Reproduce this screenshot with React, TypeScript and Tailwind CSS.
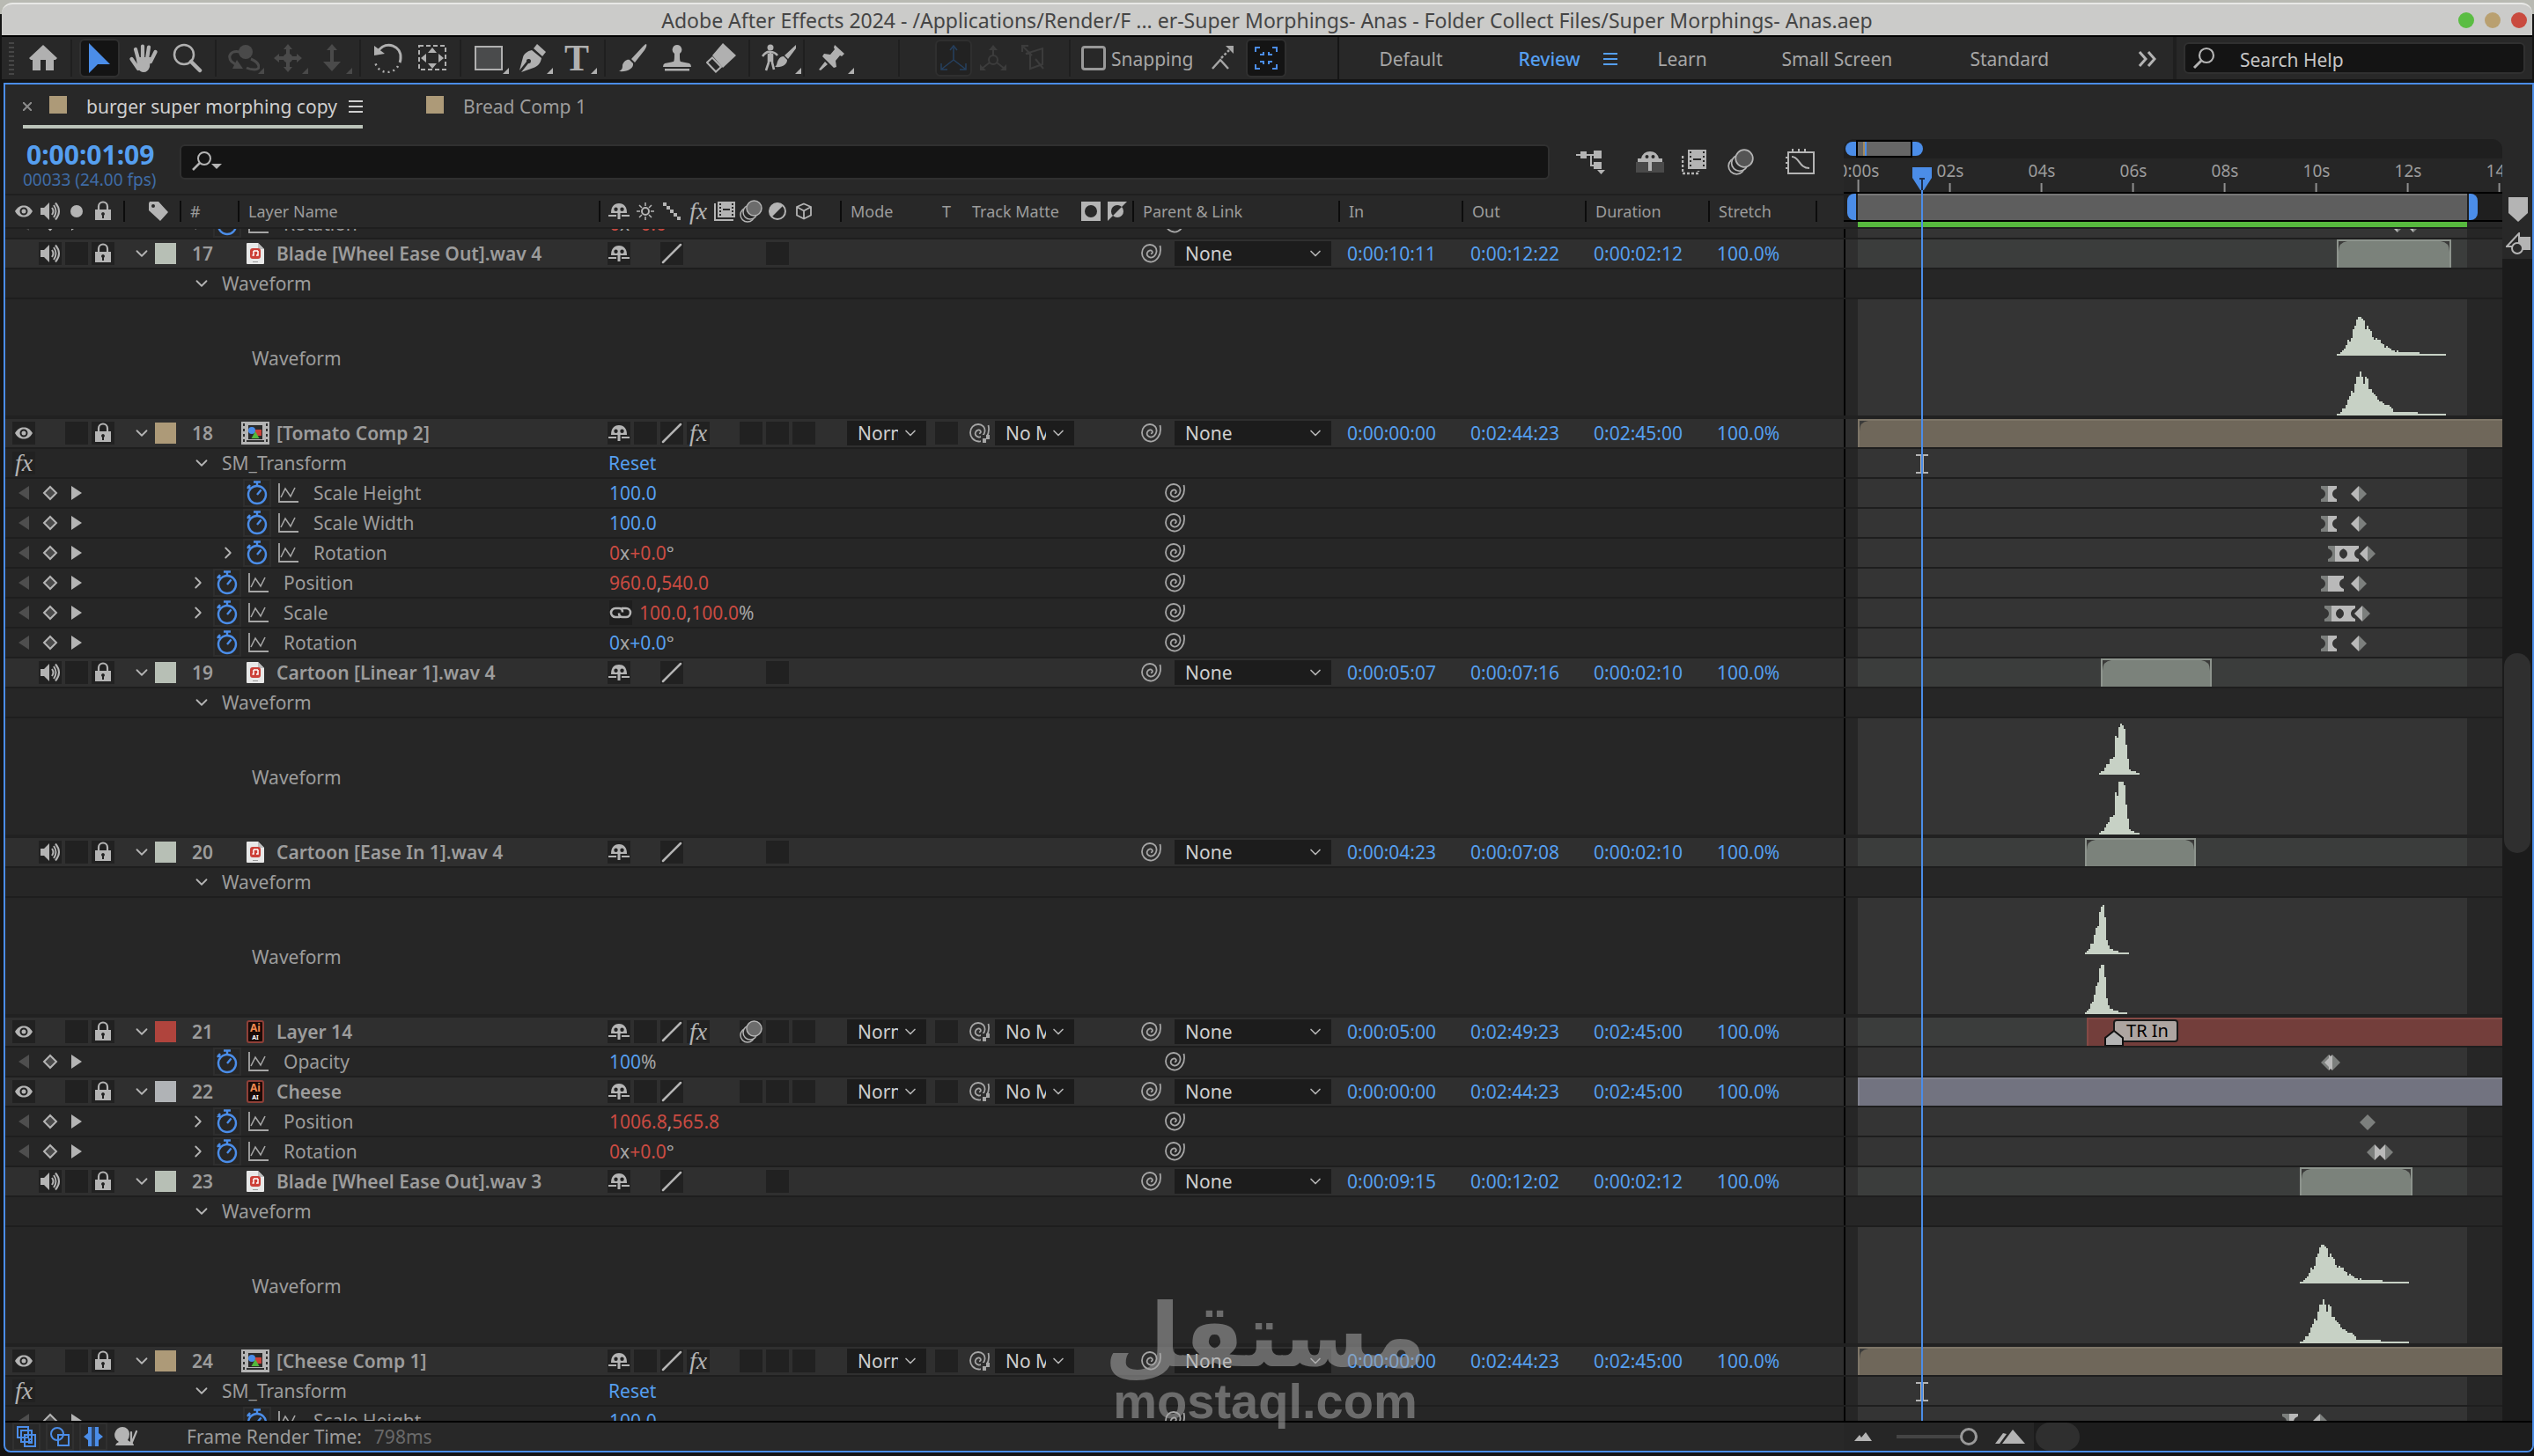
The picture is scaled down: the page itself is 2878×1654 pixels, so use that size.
import type { ReactNode } from 'react';
import { ChevronDown, ChevronRight } from 'lucide-react';

const PX_PER_SECOND = 52;

type Key = { kind: 'hold' | 'holdFull' | 'diamond' | 'diamondStart' | 'dim'; x: number };

type Layer = {
  type: 'layer';
  num: number;
  name: string;
  label: string;
  source: 'wav' | 'comp' | 'ai';
  fx?: boolean;
  blur?: boolean;
  clip: { left: number; width?: number; color: string };
  marker?: string;
  times: [string, string, string];
};
type Prop = {
  type: 'prop';
  name: string;
  depth: 1 | 2;
  twirl?: boolean;
  link?: boolean;
  value: [string, 'blue' | 'red' | 'gray'][];
  keys: Key[];
};
type Group = { type: 'group'; name: string; effect?: boolean };
type Wave = { type: 'wave'; left: number; top: number[]; bottom: number[] };
type Row = Layer | Prop | Group | Wave;

const tail = (h: number, n: number) => Array<number>(n).fill(h);

const bladeTop = [2, 2, 4, 6, 8, 12, 18, 16, 20, 30, 34, 41, 44, 44, 42, 40, 30, 34, 30, 28, 21, 18, 20, 18, 18, 14, 13, 9, 11, 9, 8, 6, 6, 4, 6, ...tail(4, 12), ...tail(2, 15)];
const bladeBottom = [2, 2, 4, 8, 8, 12, 18, 22, 28, 26, 36, 44, 44, 50, 44, 36, 44, 42, 30, 30, 26, 24, 22, 18, 16, 16, 14, 12, 12, 12, 10, 8, ...tail(4, 14), ...tail(2, 16)];
const linearTop = [2, 4, 4, 8, 12, 12, 18, 18, 20, 44, 42, 54, 58, 56, 52, 34, 18, 6, 4, 4, 4, 2, 2];
const linearBottom = [2, 4, 4, 8, 12, 14, 20, 20, 22, 48, 44, 60, 60, 60, 56, 34, 18, 6, 4, 4, 2, 2, 2];
const easeTop = [2, 4, 6, 12, 12, 22, 30, 32, 48, 54, 56, 42, 16, 10, 6, 6, 4, 4, 4, ...tail(2, 6)];
const easeBottom = [2, 4, 6, 12, 14, 22, 32, 36, 52, 56, 56, 42, 18, 10, 6, 6, 4, 4, 4, ...tail(2, 5)];

const sage = 'bg-[#7b827b] border-[#8d948d]';
const tan = 'bg-[#6f675a] border-[#7d7567]';
const tanLabel = 'bg-[#ad9a78]';
const sageLabel = 'bg-[#b7bfb5]';

const compTimes: [string, string, string] = ['0:00:00:00', '0:02:44:23', '0:02:45:00'];

const rows: Row[] = [
  { type: 'prop', name: 'Rotation', depth: 1, twirl: true, value: [['0', 'red'], ['x', 'gray'], ['+0.0', 'red'], ['°', 'gray']], keys: [{ kind: 'diamond', x: 613 }, { kind: 'diamond', x: 631 }] },
  { type: 'layer', num: 17, name: 'Blade [Wheel Ease Out].wav 4', label: sageLabel, source: 'wav', clip: { left: 544, width: 130, color: sage }, times: ['0:00:10:11', '0:00:12:22', '0:00:02:12'] },
  { type: 'group', name: 'Waveform' },
  { type: 'wave', left: 544, top: bladeTop, bottom: bladeBottom },
  { type: 'layer', num: 18, name: '[Tomato Comp 2]', label: tanLabel, source: 'comp', fx: true, clip: { left: 0, color: tan }, times: compTimes },
  { type: 'group', name: 'SM_Transform', effect: true },
  { type: 'prop', name: 'Scale Height', depth: 2, value: [['100.0', 'blue']], keys: [{ kind: 'hold', x: 535 }, { kind: 'diamond', x: 569 }] },
  { type: 'prop', name: 'Scale Width', depth: 2, value: [['100.0', 'blue']], keys: [{ kind: 'hold', x: 535 }, { kind: 'diamond', x: 569 }] },
  { type: 'prop', name: 'Rotation', depth: 2, twirl: true, value: [['0', 'red'], ['x', 'gray'], ['+0.0', 'red'], ['°', 'gray']], keys: [{ kind: 'hold', x: 543 }, { kind: 'holdFull', x: 560 }, { kind: 'diamond', x: 579 }] },
  { type: 'prop', name: 'Position', depth: 1, twirl: true, value: [['960.0', 'red'], [',', 'gray'], ['540.0', 'red']], keys: [{ kind: 'hold', x: 535 }, { kind: 'holdFull', x: 543 }, { kind: 'diamond', x: 569 }] },
  { type: 'prop', name: 'Scale', depth: 1, twirl: true, link: true, value: [['100.0', 'red'], [',', 'gray'], ['100.0', 'red'], ['%', 'gray']], keys: [{ kind: 'hold', x: 539 }, { kind: 'holdFull', x: 556 }, { kind: 'diamond', x: 573 }] },
  { type: 'prop', name: 'Rotation', depth: 1, value: [['0', 'blue'], ['x', 'gray'], ['+0.0', 'blue'], ['°', 'gray']], keys: [{ kind: 'hold', x: 535 }, { kind: 'diamond', x: 569 }] },
  { type: 'layer', num: 19, name: 'Cartoon [Linear 1].wav 4', label: sageLabel, source: 'wav', clip: { left: 276, width: 126, color: sage }, times: ['0:00:05:07', '0:00:07:16', '0:00:02:10'] },
  { type: 'group', name: 'Waveform' },
  { type: 'wave', left: 274, top: linearTop, bottom: linearBottom },
  { type: 'layer', num: 20, name: 'Cartoon [Ease In 1].wav 4', label: sageLabel, source: 'wav', clip: { left: 258, width: 126, color: sage }, times: ['0:00:04:23', '0:00:07:08', '0:00:02:10'] },
  { type: 'group', name: 'Waveform' },
  { type: 'wave', left: 258, top: easeTop, bottom: easeBottom },
  { type: 'layer', num: 21, name: 'Layer 14', label: 'bg-[#b0443d]', source: 'ai', fx: true, blur: true, clip: { left: 260, color: 'bg-[#733e3b] border-[#854a46]' }, marker: 'TR In', times: ['0:00:05:00', '0:02:49:23', '0:02:45:00'] },
  { type: 'prop', name: 'Opacity', depth: 1, value: [['100', 'blue'], ['%', 'gray']], keys: [{ kind: 'diamondStart', x: 535 }, { kind: 'diamond', x: 539 }] },
  { type: 'layer', num: 22, name: 'Cheese', label: 'bg-[#b0b3b6]', source: 'ai', clip: { left: 0, color: 'bg-[#727380] border-[#80818d]' }, times: compTimes },
  { type: 'prop', name: 'Position', depth: 1, twirl: true, value: [['1006.8', 'red'], [',', 'gray'], ['565.8', 'red']], keys: [{ kind: 'dim', x: 579 }] },
  { type: 'prop', name: 'Rotation', depth: 1, twirl: true, value: [['0', 'red'], ['x', 'gray'], ['+0.0', 'red'], ['°', 'gray']], keys: [{ kind: 'diamondStart', x: 587 }, { kind: 'diamond', x: 599 }] },
  { type: 'layer', num: 23, name: 'Blade [Wheel Ease Out].wav 3', label: sageLabel, source: 'wav', clip: { left: 502, width: 128, color: sage }, times: ['0:00:09:15', '0:00:12:02', '0:00:02:12'] },
  { type: 'group', name: 'Waveform' },
  { type: 'wave', left: 502, top: bladeTop, bottom: bladeBottom },
  { type: 'layer', num: 24, name: '[Cheese Comp 1]', label: tanLabel, source: 'comp', fx: true, clip: { left: 0, color: tan }, times: compTimes },
  { type: 'group', name: 'SM_Transform', effect: true },
  { type: 'prop', name: 'Scale Height', depth: 2, value: [['100.0', 'blue']], keys: [{ kind: 'hold', x: 491 }, { kind: 'diamond', x: 525 }] },
];

const valueColors = { blue: 'text-[#559ff0]', red: 'text-[#cb4b42]', gray: 'text-[#a6a6a6]' };

/* ---------- icons ---------- */

function Svg({ w = 24, h = 24, box, className = '', children }: { w?: number; h?: number; box?: string; className?: string; children: ReactNode }) {
  return (
    <svg width={w} height={h} viewBox={box ?? `0 0 ${w} ${h}`} fill="currentColor" className={`shrink-0 ${className}`} aria-hidden="true">
      {children}
    </svg>
  );
}

const EyeIcon = () => (
  <Svg w={22} h={22}>
    <path fillRule="evenodd" d="M1 11C4 6 7 4.500 11 4.500S18 6 21 11C18 16 15 17.500 11 17.500S4 16 1 11ZM11 6.500a4.500 4.500 0 1 0 0 9a4.500 4.500 0 1 0 0-9Z" />
    <circle cx="11" cy="11" r="2.500" />
  </Svg>
);

const SpeakerIcon = () => (
  <Svg w={24} h={24}>
    <path d="M1 8h4l6-6v20l-6-6H1Z" />
    <g fill="none" stroke="currentColor" strokeWidth="2">
      <path d="M14 8q3 4 0 8" />
      <path d="M16 5q5 7 0 14" />
      <path d="M18 2.500q8 9.500 0 19" />
    </g>
  </Svg>
);

const LockIcon = () => (
  <Svg w={20} h={24}>
    <path d="M5 11V6.500a5 5 0 0 1 10 0V11" fill="none" stroke="currentColor" strokeWidth="2.200" />
    <path fillRule="evenodd" d="M1 10h18v12H1ZM10 13a2 2 0 0 0-1 3.700V20h2v-3.300A2 2 0 0 0 10 13Z" />
  </Svg>
);

const TagIcon = () => (
  <Svg w={24} h={24}>
    <path fillRule="evenodd" d="M1 3l1-2h10l11 12-9 10L1 11ZM6 4a2 2 0 1 0 0 4a2 2 0 1 0 0-4Z" />
  </Svg>
);

const ShyIcon = () => (
  <Svg w={24} h={20}>
    <path fillRule="evenodd" d="M3 12C3 5 6 1 12 1s9 4 9 11Zm5.500-6.500a2.200 2.200 0 1 0 0 4.400a2.200 2.200 0 1 0 0-4.400Zm7 0a2.200 2.200 0 1 0 0 4.400a2.200 2.200 0 1 0 0-4.400Z" />
    <path d="M10.500 11h3v8h-3ZM0 14h9v2H0Zm15 0h9v2h-9Z" />
  </Svg>
);

const SunIcon = () => (
  <Svg w={20} h={20}>
    <circle cx="10" cy="10" r="4" fill="none" stroke="currentColor" strokeWidth="2" />
    <path d="M10 0v4M10 16v4M0 10h4M16 10h4M3 3l3 3M14 14l3 3M17 3l-3 3M6 14l-3 3" stroke="currentColor" strokeWidth="1.500" />
  </Svg>
);

const StairsIcon = () => (
  <Svg w={20} h={20}>
    <path d="M0 0h4v4H0ZM4 4h4v4H4ZM8 8h4v4H8ZM12 12h4v4h-4ZM16 16h4v4h-4Z" />
  </Svg>
);

const FrameBlendIcon = () => (
  <Svg w={24} h={24}>
    <path d="M1 3v19h21" fill="none" stroke="currentColor" strokeWidth="2" />
    <path fillRule="evenodd" d="M4 1h20v18H4ZM6 3v2h2V3Zm0 4v2h2V7Zm0 4v2h2v-2Zm0 4v2h2v-2ZM20 3v2h2V3Zm0 4v2h2V7Zm0 4v2h2v-2Zm0 4v2h2v-2ZM10 9v2h8V9Z" />
  </Svg>
);

const MotionBlurIcon = () => (
  <Svg w={26} h={26}>
    <g fill="#282828" stroke="currentColor" strokeWidth="1.500">
      <circle cx="9" cy="17" r="8" />
      <circle cx="12" cy="14" r="8" />
      <circle cx="16.500" cy="9.500" r="8.500" fill="#6c6c6c" />
    </g>
  </Svg>
);

const AdjustIcon = () => (
  <Svg w={20} h={20}>
    <circle cx="10" cy="10" r="9" fill="none" stroke="currentColor" strokeWidth="2" />
    <path d="M16.500 3.500A9.200 9.200 0 1 1 3.500 16.500Z" transform="rotate(180 10 10)" />
  </Svg>
);

const CubeIcon = () => (
  <Svg w={20} h={20}>
    <path d="M10 1.500l8 3.500v9.500L10 18.500 2 14.500V5ZM2 5l8 4.500L18 5M10 9.500v9" fill="none" stroke="currentColor" strokeWidth="1.800" />
  </Svg>
);

const SlashIcon = () => (
  <Svg w={24} h={24}>
    <path d="M2 22 22 2" stroke="currentColor" strokeWidth="2.500" strokeLinecap="round" />
  </Svg>
);

const PickWhip = ({ dotted = false }: { dotted?: boolean }) => (
  <Svg w={24} h={22}>
    <path
      d="M21.500 2C24 13 17 21 10.500 20.500 4.500 20 1 15.500 1 10.500 1 5 5 1 10 1c5 0 8 3.800 7.500 8-.5 4-3.500 7-7 6.500C7.500 15 6 12.500 7 10c1-2.500 4-3.500 5.500-1.500.8 1.300.3 2.500-1.500 3"
      fill="none"
      stroke="currentColor"
      strokeWidth="1.800"
    />
    {dotted && (
      <>
        <path d="M13 13h11v9H13Z" fill="#2f2f2f" />
        <path d="M15 17h4v-4h4v5h-4v4h-4Z" />
      </>
    )}
  </Svg>
);

const FxGlyph = () => <span className="font-['Liberation_Serif',serif] text-[28px] leading-6 italic">fx</span>;

const MatteIcon = () => (
  <Svg w={22} h={22}>
    <path fillRule="evenodd" d="M0 0h22v22H0ZM11 4a7 7 0 1 0 0 14a7 7 0 1 0 0-14Z" />
  </Svg>
);

const MatteInvertIcon = () => (
  <Svg w={22} h={22}>
    <path d="M0 0h22L0 22Z" />
    <circle cx="11" cy="11" r="7" />
    <path d="M16 6A7 7 0 0 0 6 16Z" fill="#282828" />
  </Svg>
);

const Stopwatch = () => (
  <Svg w={24} h={28}>
    <g fill="none" stroke="currentColor" strokeWidth="2.400">
      <circle cx="12" cy="16" r="10" />
      <path d="M12 16l4.500-5.500M12 2v4M8 1.500h8M1.500 6l3 3M1 9l3-4" />
    </g>
  </Svg>
);

const GraphIcon = () => (
  <Svg w={24} h={24}>
    <path d="M1 1v21h22" fill="none" stroke="currentColor" strokeWidth="1.800" />
    <path d="M3 17 8 7l6 9 5-10" fill="none" stroke="currentColor" strokeWidth="1.600" />
  </Svg>
);

const LinkIcon = () => (
  <Svg w={26} h={14}>
    <path d="M12 12H7a5 5 0 0 1 0-10h4c3 0 4 2 4 4.500M14 2h5a5 5 0 0 1 0 10h-4c-3 0-4-2-4-4.500" fill="none" stroke="currentColor" strokeWidth="2.600" />
  </Svg>
);

function SourceIcon({ source }: { source: Layer['source'] }) {
  if (source === 'wav') {
    return (
      <Svg w={20} h={26}>
        <path d="M0 2q0-1 1-1h12l7 7v16q0 1-1 1H1q-1 0-1-1Z" fill="#e8e8e8" />
        <path d="M13 1v7h7Z" fill="#bdbdbd" />
        <rect x="4" y="7" width="12" height="12" rx="3" fill="#cc4038" />
        <path d="M8 10h5M8 10v5H6.500M13 10v5h-2" stroke="#fff" strokeWidth="1.500" fill="none" />
        <path d="M7 22.500h6" stroke="#999" />
      </Svg>
    );
  }
  if (source === 'ai') {
    return (
      <span className="flex h-[26px] w-5 flex-col items-center rounded-[3px] border-2 border-[#8f3f37] bg-[#1a0b07] text-[#f08a50]">
        <span className="text-[12px] leading-[14px] font-bold">Ai</span>
        <span className="text-[7px] leading-[7px] font-bold text-white">AI</span>
      </span>
    );
  }
  return (
    <Svg w={32} h={26}>
      <path fillRule="evenodd" d="M0 0h32v26H0ZM2 2v3h2V2Zm0 6v3h2V8Zm0 6v3h2v-3Zm0 6v3h2v-3ZM28 2v3h2V2Zm0 6v3h2V8Zm0 6v3h2v-3Zm0 6v3h2v-3ZM6 21v2h20v-2Z" />
      <path d="M8 4h16v16H8Z" fill="#2a2a2a" />
      <circle cx="12" cy="10" r="4" fill="#4a8ce8" />
      <path d="M16 9h7v7h-7Z" fill="#cc4038" />
      <path d="M16 11l4.500 8h-9Z" fill="#53b83c" />
    </Svg>
  );
}

const BRIGHT = '#b9b9b9';
const DULL = '#7c7f7d';

function Keyframe({ kind, x }: Key) {
  const hold = kind === 'hold' || kind === 'holdFull';
  return (
    <svg width="18" height="18" viewBox="0 0 18 18" className="absolute top-2 -translate-x-1/2" style={{ left: x }} aria-hidden="true">
      {hold ? (
        <>
          <path d="M0 0h9v18H0v-3q5-2 5-6T0 3Z" fill={kind === 'hold' ? DULL : BRIGHT} />
          <path d="M8 0h10v3q-5 2-5 6t5 6v3H8Z" fill={BRIGHT} />
        </>
      ) : (
        <>
          <path d="M9 0v18L0 9Z" fill={kind === 'diamond' ? BRIGHT : DULL} />
          <path d="M9 0v18l9-9Z" fill={kind === 'diamondStart' ? BRIGHT : DULL} />
        </>
      )}
    </svg>
  );
}

/* ---------- small controls ---------- */

function Slot({ children, label = 'Switch' }: { children?: ReactNode; label?: string }) {
  return (
    <button type="button" aria-label={label} className="flex size-[26px] shrink-0 items-center justify-center bg-[#212121] text-[#b4b4b4]">
      {children}
    </button>
  );
}

const Gap = () => <span className="w-[26px] shrink-0" />;

function Dropdown({ value, label, className, inner }: { value: string; label: string; className: string; inner: string }) {
  return (
    <span className={`relative flex h-7 shrink-0 items-center bg-[#1c1c1c] ${className}`}>
      <select aria-label={label} className={`h-7 appearance-none overflow-hidden pl-3 text-[21px] leading-7 text-[#cfcfcf] ${inner}`}>
        <option>{value}</option>
      </select>
      <ChevronDown size={20} strokeWidth={2} className="pointer-events-none absolute right-2 text-[#b4b4b4]" />
    </span>
  );
}

function Twirl({ open, label }: { open: boolean; label: string }) {
  return (
    <button type="button" aria-label={label} className="flex h-8 w-[30px] shrink-0 items-center justify-center text-[#b4b4b4]">
      {open ? <ChevronDown size={22} strokeWidth={2} /> : <ChevronRight size={22} strokeWidth={2} />}
    </button>
  );
}

/* ---------- timeline rows ---------- */

function Track({ lane, children }: { lane: string; children?: ReactNode }) {
  return (
    <div className="relative min-w-0 flex-1 overflow-hidden border-l-2 border-black pl-3.5">
      <div className="relative h-full">
        <div className={`h-full ${lane}`} style={{ width: 692 }} />
        {children}
      </div>
    </div>
  );
}

function LayerRow({ layer }: { layer: Layer }) {
  const audio = layer.source === 'wav';
  const { left, width, color } = layer.clip;
  return (
    <div className="flex h-[34px] shrink-0 border-b-2 border-[#1e1e1e] bg-[#2f2f2f]">
      <div className="flex w-[2088px] shrink-0 items-center pl-2">
        <div className="flex gap-1">
          {audio ? <Gap /> : <Slot label="Video"><EyeIcon /></Slot>}
          {audio ? <Slot label="Audio"><SpeakerIcon /></Slot> : <Gap />}
          <Slot label="Solo" />
          <Slot label="Lock"><LockIcon /></Slot>
        </div>
        <span className="w-4" />
        <Twirl open label={`Collapse ${layer.name}`} />
        <span className={`size-6 ${layer.label}`} />
        <span className="w-[74px] pl-[18px] font-semibold">{layer.num}</span>
        <span className="flex w-8 justify-center text-[#b4b4b4]"><SourceIcon source={layer.source} /></span>
        <span className="w-96 pl-2 font-semibold">{layer.name}</span>
        <div className="flex gap-1">
          <Slot label="Shy"><ShyIcon /></Slot>
          {audio ? <Gap /> : <Slot label="Collapse transformations" />}
          <Slot label="Quality"><SlashIcon /></Slot>
          {layer.fx ? <Slot label="Effects"><FxGlyph /></Slot> : <Gap />}
          <Gap />
          {audio ? <Gap /> : <Slot label="Motion blur">{layer.blur && <MotionBlurIcon />}</Slot>}
          <Slot label="Adjustment layer" />
          {audio ? <Gap /> : <Slot label="3D layer" />}
        </div>
        <div className="flex w-[368px] items-center pl-9">
          {!audio && (
            <>
              <Dropdown value="Normal" label="Mode" className="w-[90px]" inner="w-[58px]" />
              <span className="w-2.5" />
              <Slot label="Preserve transparency" />
              <span className="ml-2 flex w-[34px] justify-center text-[#a6a6a6]"><PickWhip dotted /></span>
              <Dropdown value="No Matte" label="Track matte" className="w-[90px]" inner="w-[58px]" />
            </>
          )}
        </div>
        <span className="flex w-10 justify-start pl-0.5 text-[#a6a6a6]"><PickWhip /></span>
        <Dropdown value="None" label="Parent" className="w-[178px]" inner="w-full" />
        <span className="w-[18px]" />
        {layer.times.map((t, i) => (
          <span key={i} className="w-[140px] text-[#559ff0]">{t}</span>
        ))}
        <span className="text-[#559ff0]">100.0%</span>
      </div>
      <Track lane="bg-[#3b3d3c]">
        <div className={`absolute inset-y-0 border-t-2 border-l-2 ${color} ${width ? 'border-r-2' : 'right-0'}`} style={{ left, width }}>
          {layer.source !== 'ai' && (
            <svg width="10" height="12" viewBox="0 0 10 12" className="absolute top-0 left-0" aria-hidden="true">
              <path d="M0 0h10Q0 1 0 12Z" fill="#3b3b3a" />
            </svg>
          )}
          {audio && (
            <svg width="10" height="12" viewBox="0 0 10 12" className="absolute top-0 right-0" aria-hidden="true">
              <path d="M0 0h10v12Q10 1 0 0Z" fill="#3b3b3a" />
            </svg>
          )}
          {layer.marker && (
            <>
              <span className="absolute top-0 left-[28px] h-[26px] w-[74px] rounded-sm border-2 border-[#1a1a1a] bg-[#ada5a1] pl-1 text-center text-[20px] leading-[22px] text-black">
                {layer.marker}
              </span>
              <svg width="22" height="18" viewBox="0 0 22 18" className="absolute bottom-0 left-[18px]" aria-hidden="true">
                <path d="M1 18V9l10-8 10 8v9Z" fill="#b4b4b4" stroke="#111" strokeWidth="2" />
              </svg>
            </>
          )}
        </div>
      </Track>
    </div>
  );
}

function PropRow({ prop }: { prop: Prop }) {
  return (
    <div className="flex h-[34px] shrink-0 border-b-2 border-[#1e1e1e] bg-[#262626]">
      <div className="flex w-[2088px] shrink-0 items-center pl-2">
        <div className="flex w-[86px] gap-1 text-[#b4b4b4]">
          <button type="button" aria-label="Previous keyframe" className="flex w-[26px] items-center justify-center text-[#4e4e4e]">
            <Svg w={12} h={16}><path d="M12 0v16L0 8Z" /></Svg>
          </button>
          <button type="button" aria-label="Add keyframe" className="flex w-[26px] items-center justify-center">
            <Svg w={18} h={18}><path d="M9 2l7 7-7 7-7-7Z" fill="#4a4a4a" stroke="currentColor" strokeWidth="2" /></Svg>
          </button>
          <button type="button" aria-label="Next keyframe" className="flex w-[26px] items-center justify-center">
            <Svg w={12} h={16}><path d="M0 0v16l12-8Z" /></Svg>
          </button>
        </div>
        <div className={`flex w-[592px] items-center ${prop.depth === 2 ? 'pl-[144px]' : 'pl-[110px]'}`}>
          {prop.twirl ? <Twirl open={false} label={`Expand ${prop.name}`} /> : <span className="w-[30px]" />}
          <button type="button" aria-label={`Time-vary ${prop.name}`} className="ml-0.5 flex h-8 w-8 items-center justify-center border-2 border-[#2e2e2e] text-[#4b8de8]">
            <Stopwatch />
          </button>
          <span className="ml-2 flex w-9 text-[#a6a6a6]"><GraphIcon /></span>
          <span className="pl-1">{prop.name}</span>
        </div>
        <div className="flex w-[628px] items-center">
          {prop.link && (
            <button type="button" aria-label="Constrain proportions" className="mr-2 flex h-7 w-[26px] items-center bg-[#1e1e1e] text-[#b4b4b4]">
              <LinkIcon />
            </button>
          )}
          {prop.value.map(([text, tone], i) => (
            <span key={i} className={valueColors[tone]}>{text}</span>
          ))}
        </div>
        <span className="flex w-[30px] justify-center text-[#a6a6a6]"><PickWhip /></span>
      </div>
      <Track lane="bg-[#343434]">
        {prop.keys.map((k, i) => (
          <Keyframe key={i} {...k} />
        ))}
      </Track>
    </div>
  );
}

function GroupRow({ group }: { group: Group }) {
  return (
    <div className="flex h-[34px] shrink-0 border-b-2 border-[#1e1e1e] bg-[#262626]">
      <div className="flex w-[2088px] shrink-0 items-center pl-2">
        {group.effect ? <Slot label="Effect on"><FxGlyph /></Slot> : <Gap />}
        <span className="w-[174px]" />
        <Twirl open label={`Collapse ${group.name}`} />
        <span className="w-[447px] pl-2">{group.name}</span>
        {group.effect && <button type="button" className="text-[#559ff0]">Reset</button>}
      </div>
      <Track lane={group.effect ? 'bg-[#343434]' : ''}>
        {group.effect && (
          <svg width="14" height="22" viewBox="0 0 14 22" className="absolute top-1.5 left-[66px]" aria-hidden="true">
            <path d="M0 0h14v2H9v18h5v2H0v-2h5V2H0Z" fill="#b4b4b4" />
          </svg>
        )}
      </Track>
    </div>
  );
}

function WaveRow({ wave }: { wave: Wave }) {
  return (
    <div className="flex h-[136px] shrink-0 border-b-4 border-[#212121] bg-[#262626]">
      <div className="flex w-[2088px] shrink-0 items-center pt-0.5 pl-[280px]">Waveform</div>
      <Track lane="bg-[#343434]">
        <svg width="124" height="132" viewBox="0 0 124 132" className="absolute top-0" style={{ left: wave.left }} fill="#c7d1c5" shapeRendering="crispEdges" aria-hidden="true">
          {wave.top.map((h, i) => <rect key={`t${i}`} x={i * 2} y={64 - h} width="2" height={h} />)}
          {wave.bottom.map((h, i) => <rect key={`b${i}`} x={i * 2} y={132 - h} width="2" height={h} />)}
        </svg>
      </Track>
    </div>
  );
}

/* ---------- header ---------- */

function Col({ className, children }: { className: string; children?: ReactNode }) {
  return (
    <div className={`flex h-full shrink-0 items-center justify-between ${className}`}>
      <div className="flex items-center">{children}</div>
      <span className="h-6 w-0.5 bg-[#0c0c0c]" />
    </div>
  );
}

const HeadIcon = ({ children }: { children: ReactNode }) => (
  <span className="flex w-[30px] justify-center pr-1 text-[#b4b4b4]">{children}</span>
);

function ColumnHeads() {
  return (
    <div className="flex h-10 shrink-0 items-center border-y-2 border-[#1f1f1f] text-[18px]">
      <Col className="w-[136px] pl-2">
        <HeadIcon><EyeIcon /></HeadIcon>
        <HeadIcon><SpeakerIcon /></HeadIcon>
        <HeadIcon><Svg w={14} h={14}><circle cx="7" cy="7" r="7" /></Svg></HeadIcon>
        <HeadIcon><LockIcon /></HeadIcon>
      </Col>
      <Col className="w-16 pl-[26px]"><span className="text-[#b4b4b4]"><TagIcon /></span></Col>
      <Col className="w-[66px] pl-2.5">#</Col>
      <Col className="w-[410px] pl-2.5">Layer Name</Col>
      <Col className="w-[274px] pl-2">
        <HeadIcon><ShyIcon /></HeadIcon>
        <HeadIcon><SunIcon /></HeadIcon>
        <HeadIcon><StairsIcon /></HeadIcon>
        <HeadIcon><FxGlyph /></HeadIcon>
        <HeadIcon><FrameBlendIcon /></HeadIcon>
        <HeadIcon><MotionBlurIcon /></HeadIcon>
        <HeadIcon><AdjustIcon /></HeadIcon>
        <HeadIcon><CubeIcon /></HeadIcon>
      </Col>
      <Col className="w-[332px] pl-2.5">
        <span className="w-[104px]">Mode</span>
        <span className="w-[34px]">T</span>
        <span className="w-[124px]">Track Matte</span>
        <span className="flex gap-2 text-[#b4b4b4]"><MatteIcon /><MatteInvertIcon /></span>
      </Col>
      <Col className="w-[234px] pl-2.5">Parent &amp; Link</Col>
      <Col className="w-[140px] pl-2.5">In</Col>
      <Col className="w-[140px] pl-2.5">Out</Col>
      <Col className="w-[140px] pl-2.5">Duration</Col>
      <Col className="w-[122px] pl-2.5">Stretch</Col>
    </div>
  );
}

function Ruler() {
  const marks = ['0:00s', '02s', '04s', '06s', '08s', '10s', '12s', '14s'];
  return (
    <div className="flex min-w-0 flex-1 flex-col overflow-hidden rounded-t-xl bg-[#262626]">
      {/* time navigator */}
      <div className="flex h-[22px] items-center bg-[#1f1f1f] pl-0.5">
        <span className="h-4 w-3 rounded-l-lg bg-[#4b8de8]" />
        <span className="flex h-5 w-16 border-2 border-black bg-[#666] pl-1.5">
          <span className="h-full w-0.5 bg-[#a58a5d]" />
          <span className="h-full w-0.5 bg-[#4b8de8]" />
        </span>
        <span className="h-4 w-3 rounded-r-lg bg-[#4b8de8]" />
      </div>
      {/* labels and ticks */}
      <div className="relative h-[38px] text-[19px] leading-7">
        {marks.map((m, i) => (
          <span key={m} className="absolute top-0 flex -translate-x-1/2 flex-col items-center" style={{ left: 17 + i * 2 * PX_PER_SECOND }}>
            {m}
            <span className={i === 0 ? '-mt-1 h-3.5 w-0.5 bg-[#8f8f8f]' : 'h-2.5 w-0.5 bg-[#8f8f8f]'} />
          </span>
        ))}
      </div>
      {/* work area */}
      <div className="flex h-[34px] items-center border-y-2 border-black bg-[#1f1f1f] pl-1">
        <span className="h-[30px] w-2.5 rounded-l-lg bg-[#4b8de8]" />
        <span className="ml-0.5 h-[30px] w-[692px] border-t-2 border-[#777] bg-[#5e5e5e]" />
        <span className="ml-0.5 h-[30px] w-2.5 rounded-r-lg bg-[#4b8de8]" />
      </div>
      <div className="h-2 border-b-2 border-[#1f1f1f] pl-4">
        <div className="h-1.5 w-[692px] bg-[#57b93e]" />
      </div>
    </div>
  );
}

/* ---------- application toolbar ---------- */

function Tool({ label, children, active = false, dim = false, more = false, w = 'w-[50px]' }: { label: string; children: ReactNode; active?: boolean; dim?: boolean; more?: boolean; w?: string }) {
  return (
    <button type="button" aria-label={label} className={`relative flex h-full shrink-0 items-center justify-center ${w} ${dim ? 'text-[#4a4a4a]' : 'text-[#b0b0b0]'}`}>
      {active ? <span className="flex h-[44px] w-[46px] items-center justify-center rounded-md border-2 border-[#303030] bg-[#141414] text-[#4b8de8]">{children}</span> : children}
      {more && <Svg w={7} h={7} className="absolute right-0.5 bottom-1.5"><path d="M7 0v7H0Z" /></Svg>}
    </button>
  );
}

const Sep = ({ className = '' }: { className?: string }) => <span className={`h-[42px] w-0.5 shrink-0 bg-[#1f1f1f] ${className}`} />;

function Toolbar() {
  return (
    <div className="flex h-[50px] shrink-0 items-center border-t-2 border-black bg-[#282828] text-[21px]">
      <span className="ml-2 flex flex-col gap-[3px]">
        {Array.from({ length: 8 }, (_, i) => <span key={i} className="h-0.5 w-1.5 bg-[#464646]" />)}
      </span>
      <Tool label="Home" w="ml-2 w-[50px]">
        <Svg w={32} h={30}><path d="M16 0 32 15l-2 2h-2v12h-9V17h-6v12H4V17H2l-2-2Z" /></Svg>
      </Tool>
      <Sep className="ml-1.5" />
      <Tool label="Selection" active w="ml-1.5 w-[50px]"><Svg w={24} h={34}><path d="M0 0v34l10-10h14Z" /></Svg></Tool>
      <Tool label="Hand">
        <Svg w={32} h={32}>
          <path d="M8 15h16l-1 11q-2 6-7 6-4 0-7-5Z" />
          <path d="M10 28 2.500 17M10.500 19 7 6M15 17V2.500M20 17l2-13.500M24 20l5.500-11" stroke="currentColor" strokeWidth="4.200" strokeLinecap="round" />
        </Svg>
      </Tool>
      <Tool label="Zoom">
        <Svg w={34} h={34}>
          <circle cx="13" cy="13" r="11" fill="none" stroke="currentColor" strokeWidth="2.500" />
          <path d="M21 21l10 10" stroke="currentColor" strokeWidth="4.500" strokeLinecap="round" />
        </Svg>
      </Tool>
      <Sep className="ml-1.5" />
      <Tool label="Orbit" dim more w="ml-1.5 w-[50px]">
        <Svg w={36} h={30}>
          <circle cx="20" cy="8" r="8" />
          <path d="M13 8C3 6-1 13 4 19l7 5M26 16c10 4 12 12 4 12-4 0-7-1-9-2" fill="none" stroke="currentColor" strokeWidth="3" />
          <path d="M10 17l7 10H5Z" />
        </Svg>
      </Tool>
      <Tool label="Pan camera" dim more>
        <Svg w={32} h={32}>
          <path d="M16 0l5 6h-3v5a5 5 0 0 1 3 3h5v-3l6 5-6 5v-3h-5a5 5 0 0 1-3 3v5h3l-5 6-5-6h3v-5a5 5 0 0 1-3-3H6v3l-6-5 6-5v3h5a5 5 0 0 1 3-3V6h-3Z" />
        </Svg>
      </Tool>
      <Tool label="Dolly" dim more>
        <Svg w={22} h={32}><path d="M11 0l6 7h-4v13h8L11 31 1 20h8V7H5Z" /></Svg>
      </Tool>
      <Sep className="ml-1.5" />
      <Tool label="Rotation" w="ml-1.5 w-[50px]">
        <Svg w={34} h={34}>
          <path d="M6 8C15-3 32 3 31 17q0 3-1 5" fill="none" stroke="currentColor" strokeWidth="3" />
          <path d="M1 3v11l12-2Z" />
          <path d="M28 26a14 14 0 0 1-26-5" fill="none" stroke="currentColor" strokeWidth="2.500" strokeDasharray="2 4" />
        </Svg>
      </Tool>
      <Tool label="Pan behind">
        <Svg w={32} h={30}>
          <rect x="1" y="1" width="30" height="27" fill="none" stroke="currentColor" strokeWidth="2" strokeDasharray="5 3" />
          <path d="M16 3l5 6H11ZM16 27l5-6H11ZM3 15l6-5v10ZM29 15l-6-5v10Z" />
        </Svg>
      </Tool>
      <Sep className="ml-1.5" />
      <Tool label="Rectangle" more w="ml-1.5 w-[50px]">
        <Svg w={32} h={28}><rect x="1" y="1" width="30" height="26" fill="#4a4b4c" stroke="currentColor" strokeWidth="2" /></Svg>
      </Tool>
      <Tool label="Pen" more>
        <Svg w={32} h={32}>
          <path d="M21 0l10 9-4 5-10-9Z" />
          <path fillRule="evenodd" d="M15 7l11 9c-1 6-4 9-9 11L3 32l8-10a2.500 2.500 0 1 0-2-2L1 30 5 15c1-4 5-7 10-8Z" />
        </Svg>
      </Tool>
      <Tool label="Type" more>
        <span className="font-['Liberation_Serif',serif] text-[42px] leading-none font-bold">T</span>
      </Tool>
      <Sep className="ml-1.5" />
      <Tool label="Brush" w="ml-1.5 w-[50px]">
        <Svg w={34} h={34}>
          <path d="M32 1c1 1 0 4-2 7L19 22l-4-4L28 4c2-2 3-3 4-3ZM13 19l4 4c1 6-7 10-16 9 4-2 4-4 4-7 1-4 5-7 8-6Z" />
        </Svg>
      </Tool>
      <Tool label="Clone stamp">
        <Svg w={32} h={32}><path d="M16 1a5.500 5.500 0 0 1 3 10c0 4 0 8 1 9l10 2q2 1 2 4H0q0-3 2-4l10-2c1-1 1-5 1-9a5.500 5.500 0 0 1 3-10ZM2 28h28v2.500H2Z" /></Svg>
      </Tool>
      <Tool label="Eraser">
        <Svg w={34} h={34}>
          <path d="M19 0l15 14-15 14L7 14Z" />
          <path d="M7 16.500 17 27l-6 5.500L1 22Z" fill="none" stroke="currentColor" strokeWidth="2" />
        </Svg>
      </Tool>
      <Sep className="ml-1.5" />
      <Tool label="Roto brush" more w="ml-1.5 w-[54px]">
        <Svg w={40} h={32}>
          <circle cx="10" cy="4" r="3.500" />
          <path d="M1 14q4-6 9-5 5 0 8 4M10 9v11M8 11v10L5 30M12 11v10l2 8" fill="none" stroke="currentColor" strokeWidth="2.600" />
          <path d="M39 1v4l-9 12-4-4ZM25 14l4 4c0 5-5 9-14 8 3-2 2-5 4-8q2-4 6-4Z" />
        </Svg>
      </Tool>
      <Sep />
      <Tool label="Puppet pin" more w="ml-1 w-[54px]">
        <Svg w={32} h={32}><path d="M19 1l11 10-3 3-2-1-5 6 1 7-3 1L5 14l2-3 7 1 5-6-1-2ZM8 20l3 3-8 7-2-1Z" /></Svg>
      </Tool>
      <Sep className="ml-12" />
      <div className="ml-10 flex items-center gap-2 text-[#3c3c3c]">
        <span className="flex h-[42px] w-[42px] items-center justify-center rounded-md border-2 border-[#2f2f2f] bg-[#222] text-[#26405f]">
          <Svg w={32} h={30}><path d="M16 3v14L3 27M16 17l13 10M12 6l4-5 4 5M2 21v7h7M30 21v7h-7" fill="none" stroke="currentColor" strokeWidth="1.500" /></Svg>
        </span>
        <Svg w={32} h={30}>
          <circle cx="16" cy="17" r="5" fill="none" stroke="currentColor" strokeWidth="2" />
          <path d="M16 12V3M12 20l-9 7M20 20l9 7" stroke="currentColor" strokeWidth="2" />
          <path d="M16 0l5 6H11ZM1 22v7h7ZM31 22v7h-7Z" />
        </Svg>
        <Svg w={30} h={30} className="ml-2"><path d="M5 10 24 4v18L10 27V10ZM2 2l10 10M16 16l9 11M1 8V1h7" fill="none" stroke="currentColor" strokeWidth="2" /></Svg>
      </div>
      <Sep className="ml-6" />
      <label className="ml-3 flex items-center gap-1.5 text-[#a6a6a6]">
        <input type="checkbox" className="size-7 appearance-none rounded-sm border-3 border-[#999]" />
        <span className="pt-0.5">Snapping</span>
      </label>
      <span className="ml-5 flex text-[#a6a6a6]">
        <Svg w={28} h={28}>
          <path d="M2 26 11 16l9 10" fill="none" stroke="currentColor" strokeWidth="2.500" />
          <path d="M12 14l9-9" stroke="currentColor" strokeWidth="2.500" strokeDasharray="3 2" />
          <path d="M17 0h9v9Z" />
        </Svg>
      </span>
      <Tool label="Snap to features" active w="ml-2.5 w-[50px]">
        <Svg w={26} h={26}>
          <g fill="none" stroke="currentColor" strokeWidth="2">
            <path d="M1 6V1h5M20 1h5v5M25 20v5h-5M6 25H1v-5" />
            <path d="M6 9h4V6M20 9h-4V6M6 17h4v3M20 17h-4v3" />
          </g>
        </Svg>
      </Tool>
      <span className="ml-14 h-full w-0.5 bg-[#161616]" />
      <nav className="flex flex-1 items-center pt-0.5 text-[#a6a6a6]">
        <button type="button" className="ml-[45px] w-[158px] text-left">Default</button>
        <button type="button" className="w-[97px] text-left font-medium text-[#559ff0]">Review</button>
        <button type="button" aria-label="Workspace menu" className="flex w-[61px] text-[#559ff0]">
          <Svg w={16} h={14}><path d="M0 0h16v2H0ZM0 6h16v2H0ZM0 12h16v2H0Z" /></Svg>
        </button>
        <button type="button" className="w-[141px] text-left">Learn</button>
        <button type="button" className="w-[214px] text-left">Small Screen</button>
        <button type="button" className="text-left">Standard</button>
        <button type="button" aria-label="More workspaces" className="mr-[18px] ml-auto text-[#b4b4b4]">
          <Svg w={22} h={18}><path d="M2 1l7 8-7 8M12 1l7 8-7 8" fill="none" stroke="currentColor" strokeWidth="3" /></Svg>
        </button>
      </nav>
      <span className="h-full w-1 bg-[#1f1f1f]" />
      <label className="mx-2 flex h-9 w-[388px] items-center rounded-md border-2 border-[#303030] bg-[#141414] pl-2">
        <Svg w={26} h={26} className="text-[#b4b4b4]">
          <circle cx="16" cy="10" r="8" fill="none" stroke="currentColor" strokeWidth="2.200" />
          <path d="M10 16l-8 8" stroke="currentColor" strokeWidth="3" />
        </Svg>
        <input type="text" aria-label="Search Help" placeholder="Search Help" className="ml-7 w-full bg-transparent pt-1 placeholder:text-[#c6c6c6]" />
      </label>
    </div>
  );
}

function Watermark() {
  return (
    <div className="pointer-events-none absolute bottom-7 left-1/2 flex w-[356px] -translate-x-1/2 flex-col items-center pr-2 text-[#a6a6a6] opacity-55">
      <span dir="rtl" lang="ar" className="font-['DejaVu_Sans',sans-serif] text-[100px] leading-[92px] font-bold">مستقل</span>
      <span className="font-['Liberation_Sans',sans-serif] text-[56px] leading-[56px] font-bold">mostaql.com</span>
    </div>
  );
}

export default function App() {
  return (
    <div className="relative flex h-screen min-w-[2400px] flex-col overflow-hidden bg-[#141414] px-0.5 pt-[3px] pb-1 font-['Noto_Sans',sans-serif] text-[21px] leading-7 text-[#9c9c9c] shadow-[inset_0_16px_0_#b9bab3]">
      <header className="relative flex h-[37px] shrink-0 items-center justify-center rounded-t-xl border-t-2 border-[#e8e8e6] bg-[#cbcbc9] text-[23px] text-[#454545]">
        Adobe After Effects 2024 - /Applications/Render/F ... er-Super Morphings- Anas - Folder Collect Files/Super Morphings- Anas.aep
        <span className="absolute right-1.5 flex gap-3">
          <button type="button" aria-label="Zoom window" className="size-[18px] rounded-full bg-[#5bbd43]" />
          <button type="button" aria-label="Minimize window" className="size-[18px] rounded-full bg-[#b9a070]" />
          <button type="button" aria-label="Close window" className="size-[18px] rounded-full bg-[#c94b3f]" />
        </span>
      </header>
      <Toolbar />

      <section className="relative mt-1 ml-0.5 -mr-0.5 flex min-h-0 flex-1 flex-col overflow-hidden rounded-b-lg border-2 border-[#4b8de8] bg-[#282828]">
        {/* composition tabs */}
        <div className="flex h-[50px] shrink-0 items-stretch">
          <div className="ml-5 flex w-[386px] items-center border-b-4 border-[#bcc4ba] pt-1">
            <button type="button" aria-label="Close tab" className="text-[#8c8c8c]">
              <Svg w={10} h={10}><path d="M0 0l10 10M10 0 0 10" stroke="currentColor" strokeWidth="2" /></Svg>
            </button>
            <span className="mb-1 ml-5 size-5 bg-[#ad9a78]" />
            <a href="#burger" className="ml-[22px] text-[#cfcfcf]">burger super morphing copy</a>
            <button type="button" aria-label="Panel menu" className="ml-auto text-[#cfcfcf]">
              <Svg w={16} h={14}><path d="M0 0h16v2H0ZM0 6h16v2H0ZM0 12h16v2H0Z" /></Svg>
            </button>
          </div>
          <div className="ml-[72px] flex items-center">
            <span className="mb-1 size-5 bg-[#ad9a78]" />
            <a href="#bread" className="ml-[22px]">Bread Comp 1</a>
          </div>
        </div>

        <div className="flex min-h-0 flex-1">
          <div className="relative flex min-w-0 flex-1 flex-col">
            <div className="flex h-[114px] shrink-0 items-end">
              <div className="flex h-full w-[2088px] shrink-0 flex-col">
                <div className="flex flex-1 items-center pt-0.5">
                  <div className="w-[198px] pt-2 pl-5">
                    <div className="pl-1 text-[30px] leading-8 font-bold text-[#559ff0]">0:00:01:09</div>
                    <div className="text-[19px] leading-6 text-[#3f6ca6]">00033 (24.00 fps)</div>
                  </div>
                  <label className="flex h-[40px] flex-1 items-center rounded-md border-2 border-[#303030] bg-[#141414] pl-3 text-[#b4b4b4]">
                    <Svg w={36} h={26}>
                      <circle cx="14" cy="9" r="7" fill="none" stroke="currentColor" strokeWidth="2" />
                      <path d="M9 14l-8 8" stroke="currentColor" strokeWidth="2.500" />
                      <path d="M22 15h12l-6 6Z" />
                    </Svg>
                    <input type="text" aria-label="Search layers" className="w-full bg-transparent" />
                  </label>
                  <div className="flex w-[334px] items-center pl-[30px] text-[#b4b4b4]">
                    <button type="button" aria-label="Mini-flowchart" className="w-[68px]">
                      <Svg w={36} h={28}><path d="M0 5h5V2h7v3h8V1h9v9h-9V7h-2v10h2v-3h9v8h-9v-3h-4V7h-4v3H5V7H0ZM24 23h9l-4.500 5Z" /></Svg>
                    </button>
                    <button type="button" aria-label="Hide shy layers" className="w-[52px]">
                      <Svg w={32} h={28}>
                        <path d="M0 14h32v12H0Z" fill="#4a4a4a" />
                        <path fillRule="evenodd" d="M2 10h4q2-8 10-8t10 8h4v4H18v10h-4V14H2ZM12.500 6a2 2 0 1 0 0 4a2 2 0 1 0 0-4Zm7 0a2 2 0 1 0 0 4a2 2 0 1 0 0-4Z" />
                      </Svg>
                    </button>
                    <button type="button" aria-label="Frame blending" className="w-[52px]">
                      <Svg w={30} h={30}>
                        <path d="M1 8v20h18v-3" fill="none" stroke="currentColor" strokeWidth="2.500" strokeDasharray="3 2" />
                        <path fillRule="evenodd" d="M7 1h21v22H7ZM9 3v2h2V3Zm0 5v2h2V8Zm0 5v2h2v-2Zm0 5v2h2v-2ZM24 3v2h2V3Zm0 5v2h2V8Zm0 5v2h2v-2Zm0 5v2h2v-2ZM13 11v2h9v-2Z" />
                      </Svg>
                    </button>
                    <button type="button" aria-label="Motion blur" className="w-[66px]">
                      <Svg w={30} h={30} box="0 0 26 26">
                        <g fill="#282828" stroke="currentColor" strokeWidth="1.500">
                          <circle cx="9" cy="17" r="8" />
                          <circle cx="12" cy="14" r="8" />
                          <circle cx="16.500" cy="9.500" r="8.500" fill="#555" />
                        </g>
                      </Svg>
                    </button>
                    <button type="button" aria-label="Graph editor">
                      <Svg w={34} h={30}>
                        <path d="M3 4h29v24H3ZM8 0v4M15 0v4M22 0v4M0 10h3M0 16h3M0 22h3M7 9c9 0 8 13 20 13" fill="none" stroke="currentColor" strokeWidth="2" />
                      </Svg>
                    </button>
                  </div>
                </div>
                <ColumnHeads />
              </div>
              <Ruler />
            </div>

            <div className="flex min-h-0 flex-1 flex-col overflow-hidden">
              <div className="-mt-[22px] flex flex-col">
                {rows.map((row, i) => {
                  if (row.type === 'layer') return <LayerRow key={i} layer={row} />;
                  if (row.type === 'prop') return <PropRow key={i} prop={row} />;
                  if (row.type === 'group') return <GroupRow key={i} group={row} />;
                  return <WaveRow key={i} wave={row} />;
                })}
              </div>
            </div>

            {/* current time indicator */}
            <div className="absolute top-11 bottom-0 left-[2166px] flex w-[22px] flex-col items-center">
              <svg width="22" height="26" viewBox="0 0 22 26" aria-hidden="true">
                <path d="M0 0h22v12l-9 14H9L0 12Z" fill="#4b8de8" />
                <path d="M8 12h6v2h-2v12h-2V14H8Z" fill="#1d2f4d" />
              </svg>
              <span className="w-0.5 flex-1 bg-[#4b8de8]" />
            </div>
          </div>

          {/* marker bin and scroll bar */}
          <div className="flex w-[34px] shrink-0 flex-col items-center bg-[#1b1b1b]">
            <div className="flex h-[148px] w-full flex-col items-center gap-3 bg-[#282828] pt-[78px] pl-0.5 text-[#b4b4b4]">
              <Svg w={22} h={28}><path d="M0 0h22v18L11 28 0 18Z" /></Svg>
              <Svg w={28} h={26}>
                <path d="M14 5h14v15H14Z" />
                <path d="M1 16 15 1v15Z" fill="#282828" stroke="currentColor" strokeWidth="2" />
                <circle cx="13" cy="18" r="6" fill="#282828" stroke="currentColor" strokeWidth="2" />
              </Svg>
            </div>
            <div className="flex-[448]" />
            <div className="w-[30px] flex-[228] rounded-full bg-[#2f2f2f]" />
            <div className="flex-[645]" />
          </div>
        </div>

        {/* footer */}
        <footer className="flex h-[34px] shrink-0 items-center border-t-2 border-black">
          <div className="flex w-[2088px] items-center pl-2">
            <div className="flex gap-1.5 text-[#4b8de8]">
              <button type="button" aria-label="Layer switches" className="flex h-8 w-8 items-center justify-center border-2 border-[#303030]">
                <Svg w={22} h={24}><path d="M1 1h12v12H1ZM5 5h12v13H5ZM9 10h12v13H9ZM14 15h3v4h-3Z" fill="#282828" stroke="currentColor" strokeWidth="2" /></Svg>
              </button>
              <button type="button" aria-label="Transfer controls" className="flex h-8 w-8 items-center justify-center border-2 border-[#303030]">
                <Svg w={22} h={22}><g fill="none" stroke="currentColor" strokeWidth="2"><circle cx="8" cy="8" r="7" /><path d="M9 9h12v12H9Z" /></g></Svg>
              </button>
              <button type="button" aria-label="In and out panes" className="flex h-8 w-8 items-center justify-center border-2 border-[#303030]">
                <Svg w={24} h={24}>
                  <path d="M8 1h8v22H8Z" fill="#2c4468" />
                  <path d="M6 1h4v22H6v-7l-5-4 5-4ZM18 1h-4v22h4v-7l5-4-5-4Z" />
                </Svg>
              </button>
              <button type="button" aria-label="Render time pane" className="flex h-8 w-8 items-center justify-center text-[#b4b4b4]">
                <Svg w={28} h={22}>
                  <path d="M9 0a8 8 0 0 1 8 8q0 4-2 7l3 2h2q2 3 2 4H1q1-3 4-4A9 9 0 0 1 9 0Z" />
                  <path d="M19 19V6M20 17l5-12" stroke="currentColor" strokeWidth="2.200" strokeLinecap="round" />
                </Svg>
              </button>
            </div>
            <span className="ml-[52px]">Frame Render Time:</span>
            <span className="ml-3.5 text-[#6a6a6a]">798ms</span>
          </div>
          <div className="flex h-full flex-1 bg-[#1d1d1d]">
            <label className="flex w-[216px] items-center bg-[#262626] pl-3 text-[#b4b4b4]">
              <Svg w={20} h={10}><path d="M0 10 6 3l2 3 5-6 7 10Z" /></Svg>
              <input
                type="range"
                aria-label="Timeline zoom"
                defaultValue={100}
                className="mr-5 ml-7 h-1 w-[92px] appearance-none bg-[#444] [&::-webkit-slider-thumb]:size-5 [&::-webkit-slider-thumb]:appearance-none [&::-webkit-slider-thumb]:rounded-full [&::-webkit-slider-thumb]:border-3 [&::-webkit-slider-thumb]:border-[#999] [&::-webkit-slider-thumb]:bg-[#262626]"
              />
              <Svg w={34} h={16}><path d="M0 16 9 4l4 1-8 11ZM8 16 20 0l14 16Z" /></Svg>
            </label>
            <span className="ml-0.5 h-full w-[50px] rounded-full bg-[#2f2f2f]" />
          </div>
        </footer>
        <Watermark />
      </section>
    </div>
  );
}
